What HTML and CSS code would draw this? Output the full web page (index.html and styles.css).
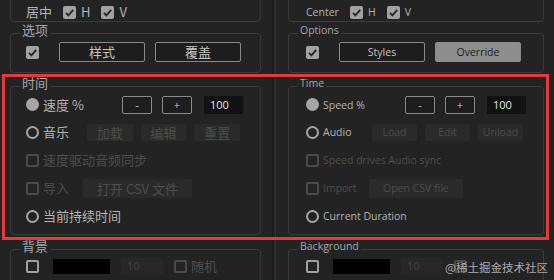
FILE: index.html
```html
<!DOCTYPE html>
<html lang="zh">
<head>
<meta charset="utf-8">
<title>Panel</title>
<link rel="stylesheet" href="styles.css">
</head>
<body>
<div class="panes">
  <section class="col col-zh">
    <div class="group group-first">
      <div class="row row-top">
        <span class="lbl lbl-gap">居中</span>
        <svg class="cb" viewBox="0 0 13 13"><rect width="13" height="13" rx="2" fill="#a2a2a2"/><path d="M3 6.8 5.4 9.3 10.2 3.8" fill="none" stroke="#262626" stroke-width="1.8"/></svg>
        <span class="lbl lbl-gap">H</span>
        <svg class="cb" viewBox="0 0 13 13"><rect width="13" height="13" rx="2" fill="#a2a2a2"/><path d="M3 6.8 5.4 9.3 10.2 3.8" fill="none" stroke="#262626" stroke-width="1.8"/></svg>
        <span class="lbl">V</span>
      </div>
    </div>
    <div class="group group-opts">
      <div class="group-title">选项</div>
      <div class="row">
        <svg class="cb" viewBox="0 0 13 13"><rect width="13" height="13" rx="2" fill="#a2a2a2"/><path d="M3 6.8 5.4 9.3 10.2 3.8" fill="none" stroke="#262626" stroke-width="1.8"/></svg>
        <div class="opt-btns">
          <button class="btn btn-opt">样式</button>
          <button class="btn btn-opt">覆盖</button>
        </div>
      </div>
    </div>
    <div class="group group-time">
      <div class="group-title">时间</div>
      <div class="row row-first">
        <span class="radio radio-on"></span><span class="lbl">速度 %</span>
        <div class="ctrls">
          <button class="btn btn-sm">-</button>
          <button class="btn btn-sm">+</button>
          <span class="num">100</span>
        </div>
      </div>
      <div class="row">
        <span class="radio"></span><span class="lbl lbl-audio">音乐</span>
        <div class="dis-btns">
          <span class="btn-dis">加载</span>
          <span class="btn-dis">编辑</span>
          <span class="btn-dis">重置</span>
        </div>
      </div>
      <div class="row">
        <span class="box box-dim"></span><span class="lbl dim">速度驱动音频同步</span>
      </div>
      <div class="row">
        <span class="box box-dim"></span><span class="lbl dim lbl-import">导入</span>
        <span class="btn-dis btn-csv">打开 CSV 文件</span>
      </div>
      <div class="row">
        <span class="radio"></span><span class="lbl">当前持续时间</span>
      </div>
    </div>
    <div class="group group-bg">
      <div class="group-title">背景</div>
      <div class="row row-bg">
        <span class="box"></span>
        <span class="swatch"></span>
        <span class="num-dis">10</span>
        <span class="box box-dim box-rand"></span><span class="lbl dim">随机</span>
      </div>
    </div>
  </section>

  <section class="col col-en">
    <div class="group group-first">
      <div class="row row-top">
        <span class="lbl lbl-gap">Center</span>
        <svg class="cb" viewBox="0 0 13 13"><rect width="13" height="13" rx="2" fill="#a2a2a2"/><path d="M3 6.8 5.4 9.3 10.2 3.8" fill="none" stroke="#262626" stroke-width="1.8"/></svg>
        <span class="lbl lbl-gap">H</span>
        <svg class="cb" viewBox="0 0 13 13"><rect width="13" height="13" rx="2" fill="#a2a2a2"/><path d="M3 6.8 5.4 9.3 10.2 3.8" fill="none" stroke="#262626" stroke-width="1.8"/></svg>
        <span class="lbl">V</span>
      </div>
    </div>
    <div class="group group-opts">
      <div class="group-title">Options</div>
      <div class="row">
        <svg class="cb" viewBox="0 0 13 13"><rect width="13" height="13" rx="2" fill="#a2a2a2"/><path d="M3 6.8 5.4 9.3 10.2 3.8" fill="none" stroke="#262626" stroke-width="1.8"/></svg>
        <div class="opt-btns">
          <button class="btn btn-opt">Styles</button>
          <button class="btn btn-opt btn-pressed">Override</button>
        </div>
      </div>
    </div>
    <div class="group group-time">
      <div class="group-title">Time</div>
      <div class="row row-first">
        <span class="radio radio-on"></span><span class="lbl">Speed %</span>
        <div class="ctrls">
          <button class="btn btn-sm">-</button>
          <button class="btn btn-sm">+</button>
          <span class="num">100</span>
        </div>
      </div>
      <div class="row">
        <span class="radio"></span><span class="lbl lbl-audio">Audio</span>
        <div class="dis-btns">
          <span class="btn-dis">Load</span>
          <span class="btn-dis">Edit</span>
          <span class="btn-dis">Unload</span>
        </div>
      </div>
      <div class="row">
        <span class="box box-dim"></span><span class="lbl dim">Speed drives Audio sync</span>
      </div>
      <div class="row">
        <span class="box box-dim"></span><span class="lbl dim lbl-import">Import</span>
        <span class="btn-dis btn-csv">Open CSV file</span>
      </div>
      <div class="row">
        <span class="radio"></span><span class="lbl">Current Duration</span>
      </div>
    </div>
    <div class="group group-bg">
      <div class="group-title">Background</div>
      <div class="row row-bg">
        <span class="box"></span>
        <span class="swatch"></span>
        <span class="num-dis">10</span>
        <span class="box box-dim box-rand"></span>
      </div>
    </div>
  </section>
</div>
<div class="annot"></div>
<div class="watermark">@稀土掘金技术社区</div>
</body>
</html>
```

FILE: styles.css
```css
* { box-sizing: border-box; }
html, body { margin: 0; padding: 0; }
body {
  width: 554px;
  height: 280px;
  overflow: hidden;
  background: #232323;
  color: #b3b3b3;
  line-height: 16px;
  position: relative;
}
.panes {
  display: grid;
  grid-template-columns: 273px 281px;
  height: 280px;
}
.col {
  --pad: 15px;
  --lbl: 44px;
  --lbl-imp: 40px;
}
.col-zh {
  padding: 0 11px 0 10px;
  border-right: 1px solid #181818;
  font-family: "Noto Sans CJK SC", "Noto Sans", sans-serif;
  font-size: 13px;
}
.col-en {
  --pad: 17px;
  --lbl: 49px;
  --lbl-imp: 46px;
  margin-left: 2px;
  padding: 0 10px 0 12px;
  border-left: 1px solid #333333;
  font-family: "Open Sans", "Noto Sans", sans-serif;
  font-size: 10.5px;
}
.group {
  border: 1px solid #3a3a3a;
  border-radius: 4px;
  padding: 0 17px 0 var(--pad);
}
.group-first { margin-top: -10px; padding-top: 12px; }
.group-opts { margin-top: 11px; padding-bottom: 6px; }
.group-time { margin-top: 13px; padding-bottom: 4px; }
.group-bg { margin-top: 14px; padding-bottom: 10px; }
.group-title {
  width: max-content;
  margin: -12px 0 0 calc(9px - var(--pad));
  padding: 0 2px;
  background: #232323;
  line-height: 16px;
  color: #a6a6a6;
}
.row {
  display: flex;
  align-items: center;
  height: 28px;
}
.row-top { height: 18px; }
.row-first { height: 27px; }
.row-bg { height: 24px; }

.lbl { white-space: nowrap; }
.lbl-gap { margin-right: 11px; }
.lbl-audio { width: var(--lbl); flex: none; }
.lbl-import { width: var(--lbl-imp); flex: none; }
.dim { color: #4d4d4d; }

.cb { width: 13px; height: 13px; flex: none; margin-right: 5px; display: block; }
.radio {
  width: 13px; height: 13px; flex: none;
  border: 2px solid #a6a6a6;
  border-radius: 50%;
  margin-right: 4px;
}
.radio-on { background: #a6a6a6; border-color: #a6a6a6; }
.box {
  width: 13px; height: 13px; flex: none;
  border: 2px solid #a0a0a0;
  border-radius: 2px;
  margin-right: 4px;
}
.box-dim { border-color: #4a4a4a; }

.btn {
  font: inherit;
  color: #c4c4c4;
  background: #1d1d1d;
  border: 1px solid #8a8a8a;
  border-radius: 2px;
  padding: 0;
  line-height: 16px;
  cursor: default;
}
.opt-btns { display: flex; gap: 10px; margin-left: 15px; }
.btn-opt { width: 86px; height: 20px; }
.btn-pressed { background: #8e8e8e; color: #1c1c1c; }
.ctrls { margin-left: auto; display: flex; align-items: center; gap: 10px; }
.btn-sm { width: 30px; height: 18px; font-family: "Open Sans", sans-serif; font-size: 11px; }
.num {
  width: 39px; height: 18px;
  margin-left: 2px;
  padding-left: 6px;
  background: #121212;
  color: #e4e4e4;
  font-family: "Open Sans", sans-serif;
  font-size: 11px;
  line-height: 18px;
}
.dis-btns { flex: 1; display: flex; gap: 8px; margin-right: 3px; }
.btn-dis {
  flex: 1;
  height: 17px;
  background: #2a2a2a;
  color: #4d4d4d;
  border-radius: 2px;
  text-align: center;
  line-height: 17px;
  white-space: nowrap;
}
.btn-csv { flex: none; padding: 0 14px; height: 19px; line-height: 19px; }

.swatch { width: 57px; height: 15px; background: #000; margin-left: 10px; flex: none; }
.num-dis {
  width: 42px; height: 16px;
  margin-left: 11px;
  padding-left: 6px;
  background: #272727;
  color: #464646;
  font-family: "Open Sans", sans-serif;
  font-size: 11px;
  line-height: 16px;
  flex: none;
}
.box-rand { margin-left: 11px; }

.annot {
  position: absolute;
  left: 2px;
  top: 74px;
  width: 547px;
  height: 166px;
  border: 3px solid #e23b3b;
}
.watermark {
  position: absolute;
  left: 445px;
  top: 258px;
  font-family: "Noto Sans CJK SC", sans-serif;
  font-size: 11.5px;
  line-height: 18px;
  color: rgba(225, 225, 225, 0.72);
  white-space: nowrap;
}
```
